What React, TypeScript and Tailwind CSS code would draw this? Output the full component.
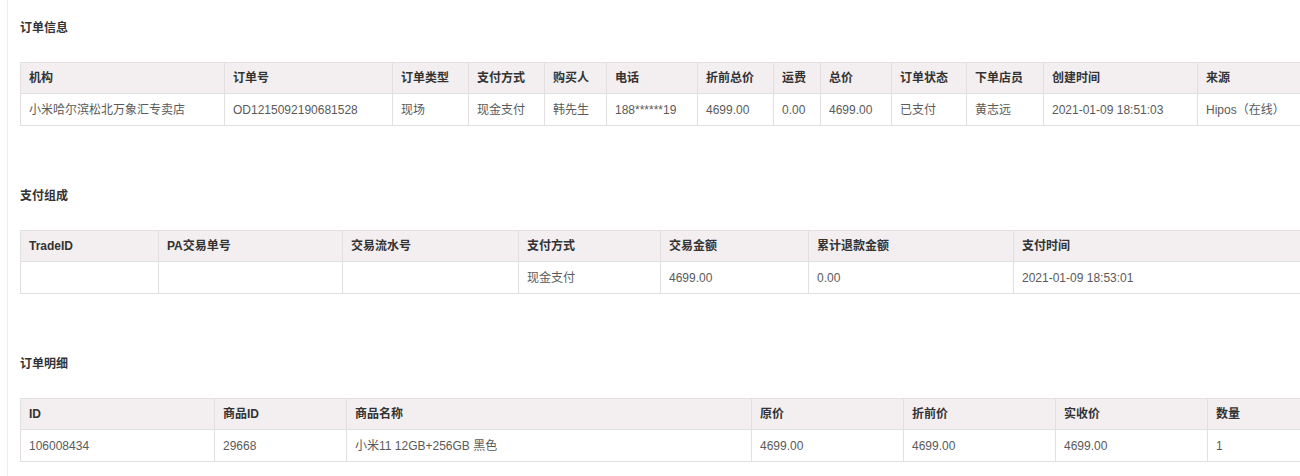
import React from "react";

type Col = { label: string; w: number };

const font = { fontFamily: '"Liberation Sans", "Noto Sans CJK SC", sans-serif' };

function DataTable({ cols, rows }: { cols: Col[]; rows: string[][] }) {
  return (
    <table className="table-fixed border-collapse text-[12px]" style={{ width: cols.reduce((a, c) => a + c.w, 0) }}>
      <colgroup>
        {cols.map((c, i) => (
          <col key={i} style={{ width: c.w }} />
        ))}
      </colgroup>
      <thead>
        <tr className="bg-[#f3eff1]">
          {cols.map((c, i) => (
            <th
              key={i}
              className="h-[31px] border border-[#e3dfe0] px-[8px] text-left font-bold text-[#333] whitespace-nowrap overflow-hidden"
            >
              {c.label}
            </th>
          ))}
        </tr>
      </thead>
      <tbody>
        {rows.map((r, ri) => (
          <tr key={ri} className="bg-white">
            {r.map((v, i) => (
              <td
                key={i}
                className="h-[32px] border border-[#e3dfe0] px-[8px] text-left text-[#5a5a5a] whitespace-nowrap overflow-hidden"
              >
                {v}
              </td>
            ))}
          </tr>
        ))}
      </tbody>
    </table>
  );
}

function Section({ title, children, last }: { title: string; children: React.ReactNode; last?: boolean }) {
  return (
    <div className={last ? "" : "mb-[60px]"}>
      <h3 className="text-[12px] font-bold leading-[20px] text-[#333]">{title}</h3>
      <div className="mt-[24px]">{children}</div>
    </div>
  );
}

export default function App() {
  const t1: Col[] = [
    { label: "机构", w: 204 },
    { label: "订单号", w: 168 },
    { label: "订单类型", w: 76 },
    { label: "支付方式", w: 76 },
    { label: "购买人", w: 62 },
    { label: "电话", w: 91 },
    { label: "折前总价", w: 76 },
    { label: "运费", w: 47 },
    { label: "总价", w: 71 },
    { label: "订单状态", w: 75 },
    { label: "下单店员", w: 77 },
    { label: "创建时间", w: 154 },
    { label: "来源", w: 120 },
  ];
  const t2: Col[] = [
    { label: "TradeID", w: 138 },
    { label: "PA交易单号", w: 184 },
    { label: "交易流水号", w: 176 },
    { label: "支付方式", w: 142 },
    { label: "交易金额", w: 148 },
    { label: "累计退款金额", w: 205 },
    { label: "支付时间", w: 300 },
  ];
  const t3: Col[] = [
    { label: "ID", w: 194 },
    { label: "商品ID", w: 132 },
    { label: "商品名称", w: 405 },
    { label: "原价", w: 152 },
    { label: "折前价", w: 152 },
    { label: "实收价", w: 152 },
    { label: "数量", w: 110 },
  ];
  return (
    <div className="relative h-[476px] w-[1300px] overflow-hidden bg-white" style={font}>
      <div className="absolute left-[7px] top-0 h-full w-px bg-[#ececec]" />
      <div className="pl-[20px] pt-[18px]">
        <Section title="订单信息">
          <DataTable
            cols={t1}
            rows={[
              [
                "小米哈尔滨松北万象汇专卖店",
                "OD1215092190681528",
                "现场",
                "现金支付",
                "韩先生",
                "188******19",
                "4699.00",
                "0.00",
                "4699.00",
                "已支付",
                "黄志远",
                "2021-01-09 18:51:03",
                "Hipos（在线）",
              ],
            ]}
          />
        </Section>
        <Section title="支付组成">
          <DataTable
            cols={t2}
            rows={[["", "", "", "现金支付", "4699.00", "0.00", "2021-01-09 18:53:01"]]}
          />
        </Section>
        <Section title="订单明细" last>
          <DataTable
            cols={t3}
            rows={[["106008434", "29668", "小米11 12GB+256GB 黑色", "4699.00", "4699.00", "4699.00", "1"]]}
          />
        </Section>
      </div>
    </div>
  );
}
